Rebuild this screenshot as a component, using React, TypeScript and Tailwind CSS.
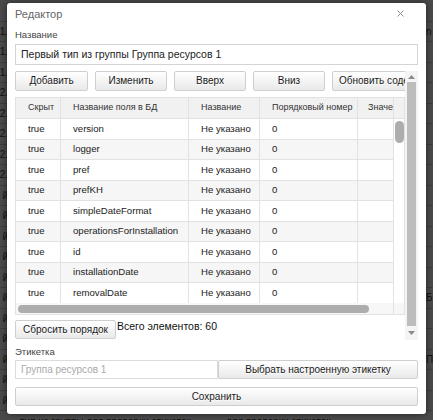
import React from 'react'

const rows = [
  'version',
  'logger',
  'pref',
  'prefKH',
  'simpleDateFormat',
  'operationsForInstallation',
  'id',
  'installationDate',
  'removalDate',
]

const bgRows = [
  '', '1.', '1.', '1.', '2.', '2.', '2.', '2.', '2.', 'й', 'й', 'й', 'й', 'й', 'й', 'й', 'й', 'й', 'й', 'й',
]

function Btn({ children, className = '' }: { children: React.ReactNode; className?: string }) {
  return (
    <button
      className={`shrink-0 rounded-[2px] border border-[#cfcfcf] bg-linear-to-b from-white to-[#e9e9e9] text-[10px] leading-none text-[#1a1a1a] [text-shadow:0_1px_0_#fff] whitespace-nowrap overflow-hidden ${className}`}
    >
      {children}
    </button>
  )
}

function Cell({ w, children, head = false }: { w: string; children?: React.ReactNode; head?: boolean }) {
  return (
    <div
      className={`${w} shrink-0 h-full flex items-center border-r border-[#e2e2e2] overflow-hidden whitespace-nowrap ${
        head ? 'pl-[12px] text-[9px] text-[#333]' : 'pl-[12px] text-[9.6px] text-[#222]'
      }`}
    >
      {children}
    </div>
  )
}

export default function App() {
  return (
    <div className="relative w-[433px] h-[420px] overflow-hidden bg-[#4a4a4a] font-['Liberation_Sans',Arial,sans-serif]">
      {/* page behind the overlay */}
      <div className="flex flex-col pt-[1px]">
        {bgRows.map((t, i) => (
          <div key={i} className="h-[20.5px] flex items-center border-b border-[#3c3c3c] text-[10px] text-[#111]">
            <div className="w-[8px] flex justify-end overflow-hidden whitespace-nowrap">{t}</div>
            <div className="flex-1" />
            <div className="w-[7px] overflow-hidden whitespace-nowrap">{i === 14 ? 'Б' : i === 17 ? 'П' : i === 1 ? 'n' : ''}</div>
          </div>
        ))}
        <div className="h-[20px] flex items-center text-[10px] text-[#111] whitespace-nowrap">
          <span className="ml-[20px] w-[190px]">тип из группы для проверки этикеток</span>
          <span className="ml-[16px]">для проверки этикеток</span>
        </div>
      </div>

      {/* dialog */}
      <div className="absolute left-[7px] top-[3px] w-[419px] h-[411px] bg-white rounded-[3px] shadow-[0_0_6px_rgba(0,0,0,0.5)] px-[8px] pt-[3px] flex flex-col">
        <div className="flex items-center justify-between h-[16px]">
          <span className="text-[11px] text-[#666]">Редактор</span>
          <svg width="7" height="7" viewBox="0 0 7 7" className="mr-[14px] mt-[-1px]">
            <path d="M0.5 0.5 L6.5 6.5 M6.5 0.5 L0.5 6.5" stroke="#8a8a8a" strokeWidth="1" />
          </svg>
        </div>

        <div className="mt-[7px] text-[9.5px] leading-[12px] text-[#444]">Название</div>
        <div className="mt-[3px] h-[21px] border border-[#d4d4d4] flex items-center px-[5px] text-[10.5px] text-[#222]">
          Первый тип из группы Группа ресурсов 1
        </div>

        {/* scrolling area */}
        <div className="mt-[6px] h-[269px] flex">
          <div className="w-[390px] overflow-hidden flex flex-col">
            <div className="flex gap-[7px] h-[20px]">
              <Btn className="w-[73px] h-[20px]">Добавить</Btn>
              <Btn className="w-[72px] h-[20px]">Изменить</Btn>
              <Btn className="w-[72px] h-[20px]">Вверх</Btn>
              <Btn className="w-[72px] h-[20px]">Вниз</Btn>
              <Btn className="w-[90px] h-[20px] text-left pl-[6px]">Обновить содержимое</Btn>
            </div>

            <div className="mt-[6px] border border-[#e2e2e2] flex flex-col">
              <div className="h-[21px] flex bg-[#f1f1f1] border-b border-[#e2e2e2]">
                <Cell w="w-[45px]" head>Скрыт</Cell>
                <Cell w="w-[128px]" head>Название поля в БД</Cell>
                <Cell w="w-[71px]" head>Название</Cell>
                <Cell w="w-[98px]" head>Порядковый номер</Cell>
                <div className="w-[36px] shrink-0 h-full flex items-center pl-[10px] text-[9px] text-[#333] border-r border-[#e2e2e2] overflow-hidden whitespace-nowrap">
                  Значение
                </div>
                <div className="flex-1" />
              </div>
              <div className="flex">
                <div className="w-[377px] flex flex-col">
                  <div className="h-[184px] overflow-hidden">
                    {rows.map((r, i) => (
                      <div
                        key={r}
                        className={`h-[20.5px] flex border-b border-[#e2e2e2] ${i % 2 ? 'bg-[#f6f6f6]' : 'bg-white'}`}
                      >
                        <Cell w="w-[45px]">true</Cell>
                        <Cell w="w-[128px]">{r}</Cell>
                        <Cell w="w-[71px]">Не указано</Cell>
                        <Cell w="w-[98px]">0</Cell>
                        <Cell w="w-[60px]" />
                      </div>
                    ))}
                  </div>
                  <div className="h-[11px] flex items-center pl-[2px] bg-[#f7f7f7]">
                    <div className="w-[351px] h-[8px] rounded-full bg-[#adadad]" />
                  </div>
                </div>
                <div className="flex-1 flex flex-col border-l border-[#e2e2e2]">
                  <div className="h-[184px] pt-[2px] flex justify-center bg-white">
                    <div className="w-[9px] h-[22px] rounded-full bg-[#adadad]" />
                  </div>
                  <div className="h-[11px] bg-[#f7f7f7]" />
                </div>
              </div>
            </div>

            <div className="mt-[5px] flex items-start">
              <Btn className="w-[101px] h-[19px]">Сбросить порядок</Btn>
              <span className="ml-[1px] text-[10.5px] leading-[13px] text-[#111]">Всего элементов: 60</span>
            </div>
          </div>

          {/* outer scrollbar */}
          <div className="w-[13px] flex flex-col bg-[#f4f4f4]">
            <div className="h-[11px] flex items-center justify-center">
              <svg width="7" height="4" viewBox="0 0 7 4">
                <path d="M0 4 L3.5 0 L7 4 Z" fill="#8a8a8a" />
              </svg>
            </div>
            <div className="flex-1 ml-[2px] w-[9px] bg-[#bdbdbd]" />
            <div className="h-[14px] flex items-center justify-center">
              <svg width="7" height="4" viewBox="0 0 7 4">
                <path d="M0 0 L3.5 4 L7 0 Z" fill="#8a8a8a" />
              </svg>
            </div>
          </div>
        </div>

        <div className="mt-[6px] text-[9.5px] leading-[12px] text-[#444]">Этикетка</div>
        <div className="mt-[2px] flex h-[19px]">
          <div className="w-[203px] h-full border border-[#dcdcdc] flex items-center px-[5px] text-[10px] text-[#aaa]">
            Группа ресурсов 1
          </div>
          <Btn className="w-[200px] h-[19px]">Выбрать настроенную этикетку</Btn>
        </div>
        <Btn className="mt-[8px] w-[403px] h-[19px]">Сохранить</Btn>
      </div>
    </div>
  )
}
